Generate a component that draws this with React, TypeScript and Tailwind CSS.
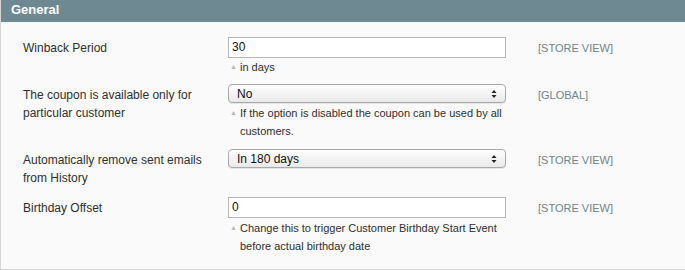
const SCOPE_STORE = "[STORE VIEW]";

type Row = {
  label: string[];
  kind: "input" | "select";
  value: string;
  hint?: string[];
  scope: string;
};

const rows: Row[] = [
  { label: ["Winback Period"], kind: "input", value: "30", hint: ["in days"], scope: SCOPE_STORE },
  {
    label: ["The coupon is available only for", "particular customer"],
    kind: "select",
    value: "No",
    hint: ["If the option is disabled the coupon can be used by all", "customers."],
    scope: "[GLOBAL]",
  },
  {
    label: ["Automatically remove sent emails", "from History"],
    kind: "select",
    value: "In 180 days",
    scope: SCOPE_STORE,
  },
  {
    label: ["Birthday Offset"],
    kind: "input",
    value: "0",
    hint: ["Change this to trigger Customer Birthday Start Event", "before actual birthday date"],
    scope: SCOPE_STORE,
  },
];

const SelectArrows = () => (
  <svg width="6" height="10" viewBox="0 0 6 10" className="shrink-0">
    <path d="M3 1 L5.5 4 L0.5 4 Z" fill="#222" />
    <path d="M3 9 L5.5 6 L0.5 6 Z" fill="#222" />
  </svg>
);

const Field = ({ row }: { row: Row }) => {
  if (row.kind === "input") {
    return (
      <div className="h-[21px] w-[278px] border border-[#b6b6b6] bg-white pl-[3px] text-[12px] leading-[19px] text-[#111]">
        {row.value}
      </div>
    );
  }
  return (
    <div className="flex h-[19px] w-[278px] items-center justify-between rounded-[4px] border border-[#a9a9a9] bg-gradient-to-b from-white to-[#e9e9e9] pl-[8px] pr-[8px] text-[12px] text-[#111] shadow-[0_1px_0_rgba(0,0,0,0.08)]">
      <span>{row.value}</span>
      <SelectArrows />
    </div>
  );
};

const App = () => {
  return (
    <div className="h-[270px] w-[685px] overflow-hidden bg-white font-['Liberation_Sans',Arial,sans-serif]">
      <div className="flex h-[270px] flex-col border-b border-l border-[#d6d6d6] bg-[#fafafa]">
        <div className="h-[22px] bg-[#6f8992] pl-[10px] text-[13px] font-bold leading-[20px] text-white">
          General
        </div>
        <div className="flex flex-col gap-[9px] pl-[22px] pt-[15px]">
          {rows.map((row, i) => (
            <div key={i} className="flex">
              <div className="w-[205px] pb-[1px] pt-[2px] text-[12px] leading-[18px] text-[#2f2f2f]">
                {row.label.map((l, j) => (
                  <div key={j}>{l}</div>
                ))}
              </div>
              <div className="w-[310px]">
                <Field row={row} />
                {row.hint && (
                  <div
                    className={
                      i === 0
                        ? "flex pt-[1px] text-[11px] leading-[16px] text-[#2f2f2f]"
                        : "flex pt-[1px] text-[11px] leading-[18px] text-[#2f2f2f]"
                    }
                  >
                    <span className="w-[12px] pl-[2px] text-[7px] text-[#b3babe]">▲</span>
                    <div>
                      {row.hint.map((h, j) => (
                        <div key={j}>{h}</div>
                      ))}
                    </div>
                  </div>
                )}
              </div>
              <div className="pt-[2px] text-[11px] leading-[18px] text-[#6f8592]">{row.scope}</div>
            </div>
          ))}
        </div>
      </div>
    </div>
  );
};

export default App;
